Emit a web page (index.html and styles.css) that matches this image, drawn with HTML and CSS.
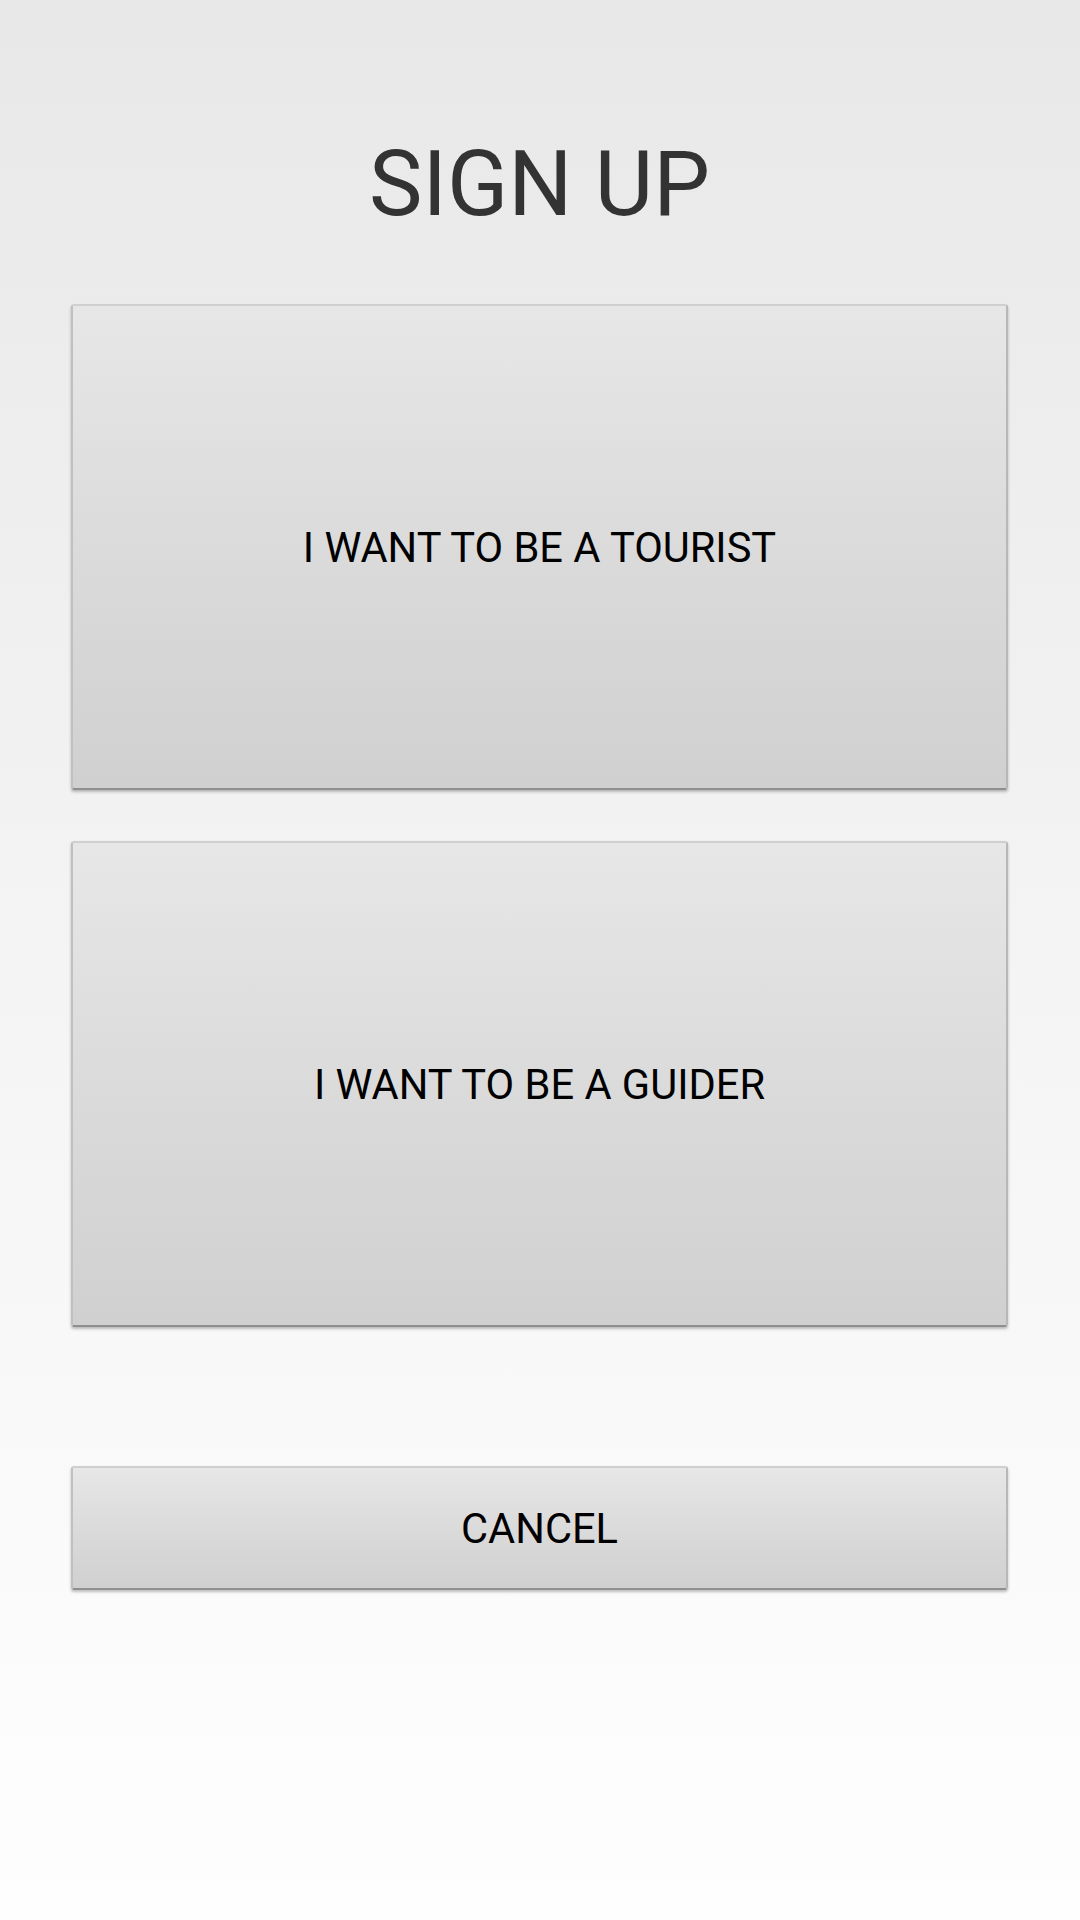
FILE: index.html
```html
<!DOCTYPE html>
<html>
<head>
<meta charset="utf-8">
<link rel="stylesheet" href="styles.css">
</head>
<body>
<div class="screen">
  <h1 class="title">SIGN UP</h1>
  <div class="choices">
    <button class="btn btn-big">I WANT TO BE A TOURIST</button>
    <button class="btn btn-big">I WANT TO BE A GUIDER</button>
  </div>
  <button class="btn btn-cancel">CANCEL</button>
</div>
</body>
</html>
```
FILE: styles.css
```css
html, body {
  margin: 0;
  padding: 0;
}
body {
  width: 1080px;
  height: 1920px;
  background: linear-gradient(to bottom, #e8e8e8 0%, #f4f4f4 50%, #fefefe 100%);
  font-family: Roboto, "Liberation Sans", sans-serif;
}
.screen {
  display: flex;
  flex-direction: column;
  padding: 140px 72px 0 71px;
}
.title {
  margin: 0;
  font-size: 90px;
  line-height: 90px;
  font-weight: 400;
  color: #333333;
  text-align: center;
}
.choices {
  display: flex;
  flex-direction: column;
  gap: 51px;
  margin-top: 74px;
}
.btn {
  display: flex;
  align-items: center;
  justify-content: center;
  width: 100%;
  box-sizing: border-box;
  margin: 0;
  padding: 0;
  font-family: Roboto, "Liberation Sans", sans-serif;
  font-size: 41.6px;
  font-weight: 400;
  color: #000000;
  background: linear-gradient(to bottom, #e7e7e7 0%, #dcdcdc 45%, #d0d0d0 100%);
  border: 2px solid #cfcfcf;
  border-bottom-color: #8f8f8f;
  border-right-color: #b8b8b8;
  border-left-color: #c0c0c0;
  border-radius: 3px;
  box-shadow: 0 2px 3px rgba(0, 0, 0, 0.25);
}
.btn-big {
  height: 486px;
}
.btn-cancel {
  height: 124px;
  margin-top: 139px;
}
```
